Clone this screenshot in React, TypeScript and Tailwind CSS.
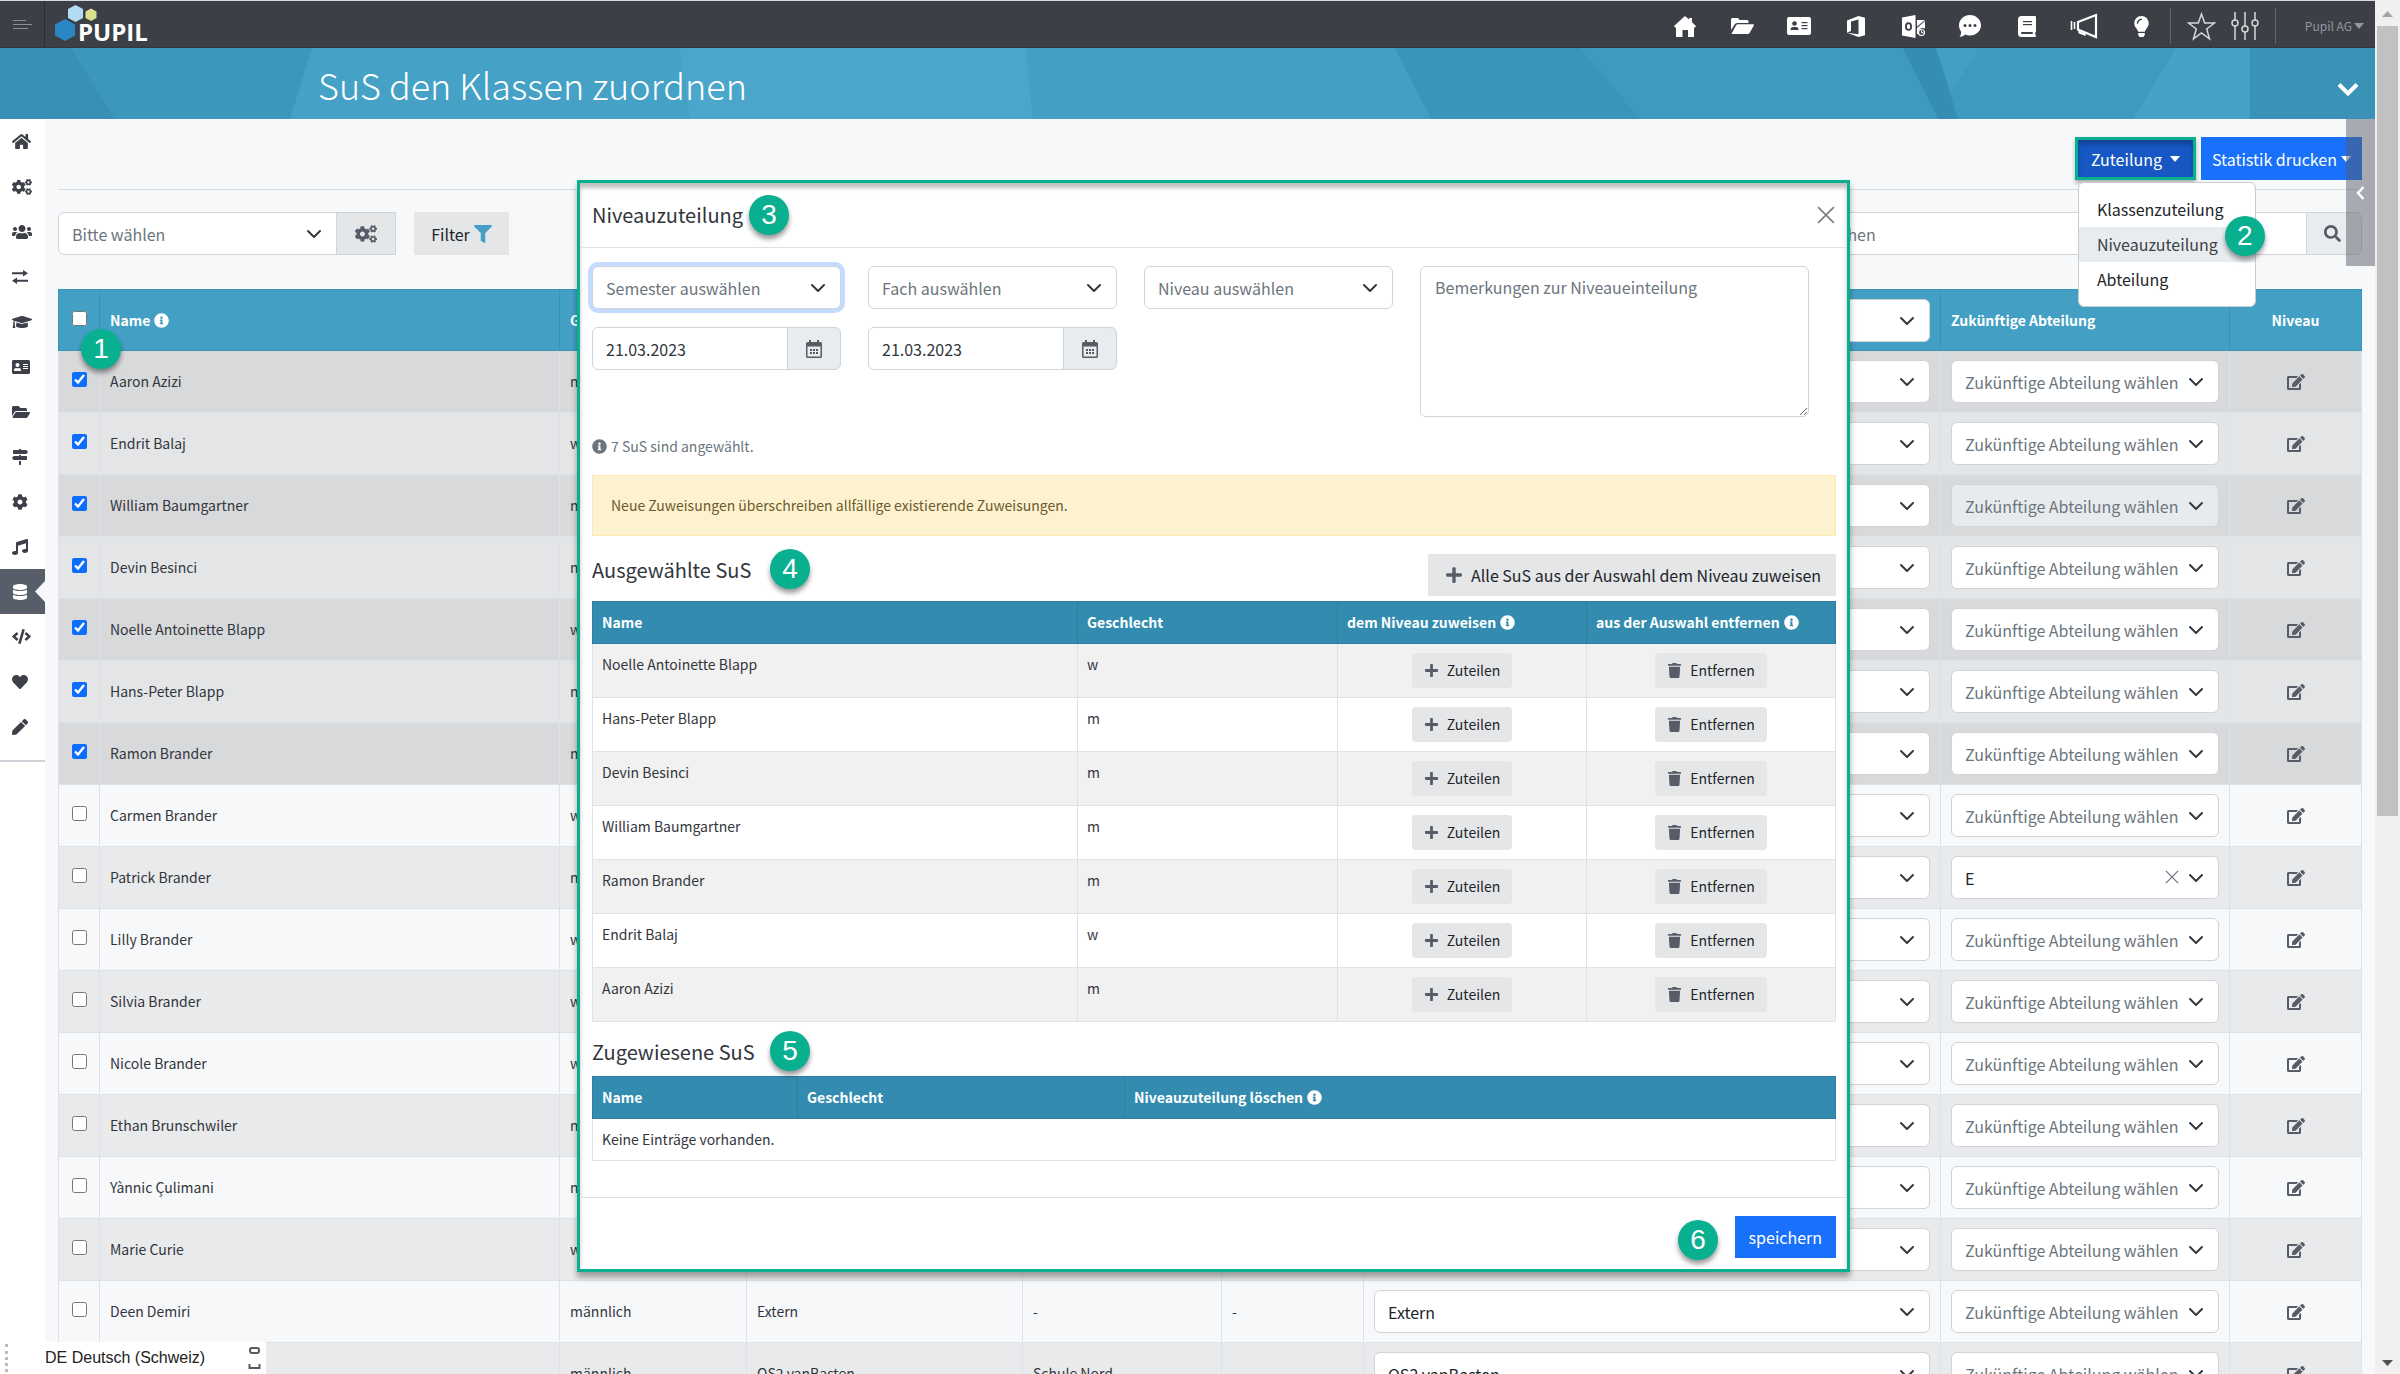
import type { ReactNode } from 'react'
import {
	FaAddressCard,
	FaCode,
	FaCog,
	FaCogs,
	FaDatabase,
	FaEdit,
	FaFilter,
	FaFolderOpen,
	FaGraduationCap,
	FaHeart,
	FaHome,
	FaInfoCircle,
	FaLightbulb,
	FaMapSigns,
	FaMusic,
	FaPen,
	FaPlus,
	FaSearch,
	FaTrash,
	FaUsers,
} from 'react-icons/fa'

type Pupil = {
	name: string
	gender: string
	school?: string
	place?: string
	target?: string
	checked?: boolean
	disabled?: boolean
	department?: string
}

const PUPILS: Pupil[] = [
	{ name: 'Aaron Azizi', gender: 'männlich', checked: true },
	{ name: 'Endrit Balaj', gender: 'weiblich', checked: true },
	{
		name: 'William Baumgartner',
		gender: 'männlich',
		checked: true,
		disabled: true,
	},
	{ name: 'Devin Besinci', gender: 'männlich', checked: true },
	{ name: 'Noelle Antoinette Blapp', gender: 'weiblich', checked: true },
	{ name: 'Hans-Peter Blapp', gender: 'männlich', checked: true },
	{ name: 'Ramon Brander', gender: 'männlich', checked: true },
	{ name: 'Carmen Brander', gender: 'weiblich' },
	{ name: 'Patrick Brander', gender: 'männlich', department: 'E' },
	{ name: 'Lilly Brander', gender: 'weiblich' },
	{ name: 'Silvia Brander', gender: 'weiblich' },
	{ name: 'Nicole Brander', gender: 'weiblich' },
	{ name: 'Ethan Brunschwiler', gender: 'männlich' },
	{ name: 'Yànnic Çulimani', gender: 'männlich' },
	{ name: 'Marie Curie', gender: 'weiblich' },
	{
		name: 'Deen Demiri',
		gender: 'männlich',
		school: 'Extern',
		place: '-',
		target: 'Extern',
	},
	{
		name: '',
		gender: 'männlich',
		school: 'OS2 vanBasten',
		place: 'Schule Nord',
		target: 'OS2 vanBasten',
	},
]

const SELECTED = [
	['Noelle Antoinette Blapp', 'w'],
	['Hans-Peter Blapp', 'm'],
	['Devin Besinci', 'm'],
	['William Baumgartner', 'm'],
	['Ramon Brander', 'm'],
	['Endrit Balaj', 'w'],
	['Aaron Azizi', 'm'],
]

const SIDEBAR = [
	{ label: 'Start', icon: <FaHome size={19} /> },
	{ label: 'Einstellungen', icon: <FaCogs size={20} /> },
	{ label: 'Personen', icon: <FaUsers size={20} /> },
	{ label: 'Zuordnung', icon: <SwapIcon /> },
	{ label: 'Klassen', icon: <FaGraduationCap size={20} /> },
	{ label: 'Kontakte', icon: <FaAddressCard size={18} /> },
	{ label: 'Ordner', icon: <FaFolderOpen size={18} /> },
	{ label: 'Wegweiser', icon: <FaMapSigns size={16} /> },
	{ label: 'System', icon: <FaCog size={16} /> },
	{ label: 'Musik', icon: <FaMusic size={16} /> },
	{ label: 'Daten', icon: <FaDatabase size={16} />, active: true },
	{ label: 'Entwicklung', icon: <FaCode size={19} /> },
	{ label: 'Favoriten', icon: <FaHeart size={16} /> },
	{ label: 'Bearbeiten', icon: <FaPen size={16} /> },
]

const TOPBAR = [
	{ label: 'Start', icon: <HouseIcon /> },
	{ label: 'Ordner', icon: <FolderIcon /> },
	{ label: 'Kontakte', icon: <CardIcon /> },
	{ label: 'Office', icon: <OfficeIcon /> },
	{ label: 'Outlook', icon: <OutlookIcon /> },
	{ label: 'Nachrichten', icon: <ChatIcon /> },
	{ label: 'Handbuch', icon: <BookIcon /> },
	{ label: 'Mitteilungen', icon: <MegaphoneIcon /> },
	{ label: 'Tipps', icon: <FaLightbulb size={21} /> },
]

function SwapIcon() {
	return (
		<svg width="16" height="14" viewBox="0 0 16 14" fill="currentColor">
			<path d="M0 2.200h11V0l5 3.200-5 3.200V4.200H0zM16 9.800v2H5V14L0 10.800l5-3.200v2.200z" />
		</svg>
	)
}

function HouseIcon() {
	return (
		<svg width="22" height="21" viewBox="0 0 22 21" fill="currentColor">
			<path d="M11 0l4 3.600V2h3v4.300L22 10l-1 1.500H20V21h-6v-7H8.500v7H2v-9.500H1L0 10z" />
		</svg>
	)
}

function FolderIcon() {
	return (
		<svg width="23" height="16" viewBox="0 0 23 16" fill="currentColor">
			<path d="M0 12V1.500Q0 0 1.500 0H7l1.500 2H16q1.500 0 1.500 1.500V5H6.500Q5 5 4 6z" />
			<path d="M.6 15.500L5 7.500Q5.600 6.300 7 6.300h15q1.500 0 .7 1.400l-4 7Q18 16 16.500 16H1.500Q.3 16 .6 15.500z" />
		</svg>
	)
}

function CardIcon() {
	return (
		<svg width="24" height="18" viewBox="0 0 24 18">
			<rect width="24" height="18" rx="2" fill="currentColor" />
			<g fill="#3d3f47">
				<circle cx="7.500" cy="6.500" r="2.300" />
				<path d="M3.500 13q0-3 2.500-3h3q2.500 0 2.500 3z" />
				<rect x="14.500" y="5" width="6" height="1.200" />
				<rect x="14.500" y="8" width="6" height="1.200" />
				<rect x="14.500" y="11" width="6" height="1.200" />
			</g>
		</svg>
	)
}

function OfficeIcon() {
	return (
		<svg width="18" height="21" viewBox="0 0 18 21" fill="currentColor">
			<path d="M0 4.500L11.500 0 18 1.800v17.400L11.500 21 0 16.800l11.500 1.400V3.600L4 5.400V15l-4 1.800z" />
		</svg>
	)
}

function OutlookIcon() {
	return (
		<svg width="23" height="23" viewBox="0 0 23 23">
			<path d="M0 2.500L13.500 0v23L0 20.500z" fill="currentColor" />
			<ellipse
				cx="6.500"
				cy="11.500"
				rx="2.600"
				ry="3.400"
				fill="none"
				stroke="#3d3f47"
				strokeWidth="1.800"
			/>
			<path
				d="M15 5h8l-8 6.500zM15 13l8-7v7.500a5 5 0 0 0-7 5.500H15z"
				fill="currentColor"
			/>
			<circle
				cx="19.500"
				cy="17.500"
				r="3"
				fill="none"
				stroke="currentColor"
				strokeWidth="1.200"
			/>
			<path d="M19.500 15.500v2.200h1.800" fill="none" stroke="currentColor" />
		</svg>
	)
}

function ChatIcon() {
	return (
		<svg width="22" height="22" viewBox="0 0 22 22">
			<path
				d="M11 0c6 0 11 4.500 11 10.300S17 20.500 11 20.500c-1.700 0-3.300-.4-4.700-1Q4 21.500.5 22q1.800-2.200 1.600-5.200A10 10 0 0 1 0 10.300C0 4.500 5 0 11 0z"
				fill="currentColor"
			/>
			<g fill="#3d3f47">
				<circle cx="6" cy="10.500" r="1.500" />
				<circle cx="11" cy="10.500" r="1.500" />
				<circle cx="16" cy="10.500" r="1.500" />
			</g>
		</svg>
	)
}

function BookIcon() {
	return (
		<svg width="18" height="21" viewBox="0 0 18 21">
			<path
				d="M3.500 0H17q1 0 1 1v14q0 .8-.6 1.200-.3 1.300 0 2.600.6.300.6 1.100 0 1.100-1 1.100H3.500Q0 21 0 17.500v-14Q0 0 3.500 0z"
				fill="currentColor"
			/>
			<g fill="#3d3f47">
				<rect x="5" y="5" width="9" height="1.200" />
				<rect x="5" y="8" width="9" height="1.200" />
				<rect x="3" y="16" width="12" height="2" rx="1" />
			</g>
		</svg>
	)
}

function MegaphoneIcon() {
	return (
		<svg
			width="28"
			height="26"
			viewBox="0 0 28 26"
			fill="none"
			stroke="currentColor"
			strokeWidth="2.200"
		>
			<path d="M1.500 8v9M4.500 9v7" strokeWidth="1.600" />
			<path d="M26 2v22L8 16.500V9z" />
			<path d="M9.500 17v2.500l5 2V19" />
		</svg>
	)
}

function StarIcon() {
	return (
		<svg
			width="29"
			height="29"
			viewBox="0 0 29 29"
			fill="none"
			stroke="currentColor"
			strokeWidth="1.500"
		>
			<path d="M14.500 2l3.200 9h9.800l-7.800 6 2.800 9.800-8-5.800-8 5.800L9.300 17 1.500 11h9.800z" />
		</svg>
	)
}

function SlidersIcon() {
	return (
		<svg
			width="28"
			height="28"
			viewBox="0 0 28 28"
			fill="none"
			stroke="currentColor"
			strokeWidth="1.500"
		>
			<path d="M4 0v8M4 14v14M14 0v14M14 20v8M24 0v8M24 14v14" />
			<circle cx="4" cy="11" r="3" />
			<circle cx="14" cy="17" r="3" />
			<circle cx="24" cy="11" r="3" />
		</svg>
	)
}

function CalendarIcon() {
	return (
		<svg width="16" height="18" viewBox="0 0 16 18">
			<path
				d="M3 0h2v2h6V0h2v2h1.500Q16 2 16 3.500v13q0 1.500-1.500 1.500h-13Q0 18 0 16.500v-13Q0 2 1.500 2H3zM1.500 6.500v10h13v-10z"
				fill="#575d68"
			/>
			<path
				d="M4 10h2M7 10h2M10 10h2M4 13h2M7 13h2M10 13h2"
				stroke="#575d68"
				strokeWidth="2"
			/>
		</svg>
	)
}

function CloseIcon({ size }: { size: number }) {
	return (
		<svg
			width={size}
			height={size}
			viewBox="0 0 16 16"
			fill="none"
			stroke="currentColor"
			strokeWidth="1.500"
		>
			<path d="M1 1l14 14M15 1L1 15" />
		</svg>
	)
}

function Caret({ className = '' }: { className?: string }) {
	return (
		<svg
			className={className}
			width="10"
			height="6"
			viewBox="0 0 10 6"
			fill="currentColor"
		>
			<path d="M0 0h10L5 6z" />
		</svg>
	)
}

function Chevron({ className }: { className?: string }) {
	return (
		<svg
			className={className}
			width="16"
			height="16"
			viewBox="0 0 16 16"
			fill="none"
			stroke="#343a40"
			strokeWidth="2"
			strokeLinecap="round"
			strokeLinejoin="round"
		>
			<path d="M2 5l6 6 6-6" />
		</svg>
	)
}

function Logo() {
	return (
		<div className="relative ml-[10px] h-[38px] w-[94px]">
			<svg
				className="absolute inset-0"
				width="44"
				height="38"
				viewBox="0 0 44 38"
			>
				<path d="M10 14l10 5.500v11L10 36 0 30.500v-11z" fill="#2a86c4" />
				<path d="M20.500 0L28 4v9l-7.500 4L13 13V4z" fill="#b2dcf1" />
				<path d="M36 3.500l5.500 3v6.500L36 16l-5.500-3V6.500z" fill="#dbe08f" />
			</svg>
			<span className="absolute top-[13px] left-[23px] font-['Open_Sans'] text-[24px] leading-7 font-bold text-white">
				PUPIL
			</span>
		</div>
	)
}

function Callout({ n, className }: { n: number; className: string }) {
	return (
		<span
			className={`absolute z-20 flex size-10 items-center justify-center rounded-full bg-[#08b090] font-['Liberation_Sans'] text-[28px] leading-10 text-white shadow-[0_4px_5px_rgba(0,0,0,.4)] ${className}`}
		>
			{n}
		</span>
	)
}

function Select({
	label,
	value,
	className = '',
	selectClass = 'text-[#6c757d]',
	clearable,
	disabled,
}: {
	label: string
	value?: string
	className?: string
	selectClass?: string
	clearable?: boolean
	disabled?: boolean
}) {
	return (
		<div className={`relative ${className}`}>
			<select
				aria-label={label}
				disabled={disabled}
				className={`block h-[43px] w-full appearance-none rounded-md border border-[#ced4da] bg-white pr-10 pl-[13px] text-[16px] leading-6 disabled:bg-[#e8ebee] disabled:opacity-100 ${selectClass}`}
			>
				<option>{value ?? label}</option>
			</select>
			{clearable && (
				<button
					type="button"
					aria-label="Auswahl löschen"
					className="absolute top-[14px] right-10 text-[#6c757d]"
				>
					<CloseIcon size={14} />
				</button>
			)}
			<Chevron className="pointer-events-none absolute top-[14px] right-[15px]" />
		</div>
	)
}

function DateField({ label }: { label: string }) {
	return (
		<div className="flex h-[43px] w-[249px]">
			<input
				aria-label={label}
				defaultValue="21.03.2023"
				className="w-0 grow rounded-l-md border border-[#ced4da] bg-white px-[13px] text-[16px]"
			/>
			<button
				type="button"
				aria-label="Kalender öffnen"
				className="-ml-px flex w-[54px] items-center justify-center rounded-r-md border border-[#ced4da] bg-[#e9ecef]"
			>
				<CalendarIcon />
			</button>
		</div>
	)
}

function SmallButton({ children }: { children: ReactNode }) {
	return (
		<button
			type="button"
			className="inline-flex h-[35px] items-center gap-2 rounded bg-[#e5e6e8] px-3 text-[14px] text-[#212529]"
		>
			{children}
		</button>
	)
}

function Topbar() {
	return (
		<header className="flex h-12 shrink-0 items-center border-t border-b border-t-[#d5dadc] border-b-[#34363d] bg-[#3d3f47] text-white">
			<button
				type="button"
				aria-label="Menü"
				className="flex h-full w-[45px] flex-col justify-center gap-[3px] border-r border-[#2b2d32] pl-[13px]"
			>
				<span className="h-px w-[13px] bg-[#8b8d92]" />
				<span className="h-px w-[19px] bg-[#8b8d92]" />
				<span className="h-px w-[15px] bg-[#8b8d92]" />
			</button>
			<Logo />
			<nav className="ml-auto flex h-full items-center pt-1">
				{TOPBAR.map((item) => (
					<a
						key={item.label}
						href="#"
						aria-label={item.label}
						className="flex w-[57px] items-center justify-center"
					>
						{item.icon}
					</a>
				))}
				<div className="flex h-9 items-center gap-[15px] border-r border-l border-[#62646b] px-4 text-[#d6d7d9]">
					<StarIcon />
					<SlidersIcon />
				</div>
				<button
					type="button"
					className="mr-[11px] ml-[29px] flex items-center gap-0.5 text-[12px] text-[#95979b]"
				>
					Pupil AG <Caret />
				</button>
			</nav>
		</header>
	)
}

function Banner() {
	return (
		<div className="relative flex h-[71px] shrink-0 items-center justify-between bg-[#439fc3] pr-4 pl-[318px]">
			<svg
				className="absolute inset-0 h-full w-full"
				viewBox="0 0 2375 71"
				preserveAspectRatio="none"
			>
				<path d="M0 0H2375V71H0z" fill="#3e9abf" />
				<path d="M0 0H71L115 71H0z" fill="#3890b4" />
				<path d="M71 0H312L290 71H115z" fill="#3c97bb" />
				<path d="M312 0H679L690 71H290z" fill="#45a1c5" />
				<path d="M679 0H1026L1033 71H690z" fill="#4aa6ca" />
				<path d="M1026 0H1395L1431 71H1033z" fill="#439fc3" />
				<path d="M1395 0H1580L1640 71H1431z" fill="#3a95ba" />
				<path d="M1903 0H1936L1958 71H1938z" fill="#358db2" />
				<path d="M1936 0H1979L1951 45z" fill="#43a0c4" />
				<path d="M2176 0H2250V71H2133z" fill="#45a1c5" />
				<path d="M2250 0H2375V71H2250z" fill="#3a93b6" />
			</svg>
			<h1 className="relative text-[36px] leading-[48px] font-light text-white">
				SuS den Klassen zuordnen
			</h1>
			<button type="button" aria-label="Aufklappen" className="relative mt-3">
				<svg
					width="22"
					height="16"
					viewBox="0 0 22 16"
					fill="none"
					stroke="#fff"
					strokeWidth="4"
				>
					<path d="M2 2.500l9 9 9-9" />
				</svg>
			</button>
		</div>
	)
}

function Sidebar() {
	return (
		<aside className="w-[45px] shrink-0 bg-white">
			<nav className="border-b-2 border-[#ced1d7] pb-[11px]">
				{SIDEBAR.map((item) => (
					<a
						key={item.label}
						href="#"
						aria-label={item.label}
						className={`relative flex h-[45px] items-center pl-3 ${item.active ? 'bg-[#575e69] text-white' : 'text-[#3d4049]'}`}
					>
						{item.icon}
						{item.active && (
							<svg
								className="absolute top-3 right-0"
								width="10"
								height="21"
								viewBox="0 0 10 21"
							>
								<path d="M10 0v21L0 10.500z" fill="#f7f8fa" />
							</svg>
						)}
					</a>
				))}
			</nav>
		</aside>
	)
}

function Actions() {
	return (
		<div className="flex justify-end gap-[5px] pt-[18px] text-[16px] text-white">
			<div className="relative z-30">
				<button
					type="button"
					className="flex h-[43px] items-center gap-2 border-[3px] border-[#08b090] bg-[#1657c4] px-[13px] shadow-[0_3px_4px_rgba(0,0,0,.3),inset_0_4px_4px_rgba(0,0,0,.25)]"
				>
					Zuteilung <Caret />
				</button>
				<div className="absolute top-[45px] left-[3px] w-[178px] rounded-md border border-[#c9cccf] bg-white py-[9px] text-[#212529]">
					<a href="#" className="block px-[18px] leading-[35px]">
						Klassenzuteilung
					</a>
					<a
						href="#"
						className="block bg-[#e9ecef] px-[18px] leading-[35px] text-[#3d4147]"
					>
						Niveauzuteilung
					</a>
					<a href="#" className="block px-[18px] leading-[35px]">
						Abteilung
					</a>
				</div>
				<Callout n={2} className="top-[79px] left-[150px]" />
			</div>
			<button
				type="button"
				className="flex h-[43px] items-center gap-1 bg-[#1970fb] px-[11px]"
			>
				Statistik drucken <Caret />
			</button>
		</div>
	)
}

function Toolbar() {
	return (
		<div className="mt-[22px] flex h-[43px] text-[16px]">
			<Select
				label="Bitte wählen"
				className="w-[279px]"
				selectClass="rounded-r-none text-[#6c757d]"
			/>
			<button
				type="button"
				aria-label="Auswahl konfigurieren"
				className="-ml-px flex w-[60px] items-center justify-center border border-[#ced4da] bg-[#e5e6e8] text-[#575d68]"
			>
				<FaCogs size={22} />
			</button>
			<button
				type="button"
				className="ml-[18px] flex w-[95px] items-center justify-center gap-1 bg-[#e5e6e8] text-[#212529]"
			>
				Filter <FaFilter size={18} className="text-[#439fc3]" />
			</button>
			<input
				aria-label="Suchen"
				placeholder="Suchen"
				className="ml-auto w-[500px] border border-r-0 border-[#ced4da] bg-white px-[13px] placeholder:text-[#6c757d]"
			/>
			<button
				type="button"
				aria-label="Suche starten"
				className="flex w-[56px] items-center justify-center rounded-r-md border border-[#ced4da] bg-[#e9ecef] pr-1 text-[#575d68]"
			>
				<FaSearch size={17} />
			</button>
		</div>
	)
}

function PupilTable() {
	return (
		<table className="mt-[34px] w-full table-fixed border-collapse text-[14px] text-[#32363c]">
			<colgroup>
				<col className="w-[41px]" />
				<col className="w-[460px]" />
				<col className="w-[187px]" />
				<col className="w-[276px]" />
				<col className="w-[199px]" />
				<col className="w-[142px]" />
				<col />
				<col className="w-[289px]" />
				<col className="w-[132px]" />
			</colgroup>
			<thead>
				<tr className="h-[61px] bg-[#439fc3] text-left text-white *:border *:border-[#3a93b6] *:px-[10px] *:font-bold">
					<th>
						<input
							type="checkbox"
							aria-label="Alle auswählen"
							className="mx-auto mb-1 block size-[15px]"
						/>
					</th>
					<th>
						<span className="flex items-center gap-1">
							Name <FaInfoCircle size={15} />
						</span>
					</th>
					<th>Geschlecht</th>
					<th>Schule</th>
					<th>Ort</th>
					<th>Klasse</th>
					<th>
						<Select label="Zukünftige Schule" />
					</th>
					<th>Zukünftige Abteilung</th>
					<th>
						<span className="block text-center">Niveau</span>
					</th>
				</tr>
			</thead>
			<tbody>
				{PUPILS.map((p, i) => (
					<tr
						key={i}
						className={`h-[62px] *:border *:border-[#dee1e5] *:px-[10px] ${
							p.checked
								? i % 2
									? 'bg-[#e3e5e7]'
									: 'bg-[#d8d9db]'
								: i % 2
									? 'bg-[#f7f8fa]'
									: 'bg-[#e9eaeb]'
						}`}
					>
						<td>
							<input
								type="checkbox"
								aria-label={p.name}
								defaultChecked={p.checked}
								className="mx-auto mb-1 block size-[15px] accent-[#0d6efd]"
							/>
						</td>
						<td>{p.name}</td>
						<td>{p.gender}</td>
						<td>{p.school}</td>
						<td>{p.place}</td>
						<td>-</td>
						<td>
							<Select
								label="Zukünftige Schule"
								value={p.target ?? ''}
								selectClass="text-[#212529]"
							/>
						</td>
						<td>
							<Select
								label="Zukünftige Abteilung wählen"
								value={p.department}
								disabled={p.disabled}
								clearable={!!p.department}
								selectClass={
									p.department ? 'text-[#212529]' : 'text-[#6c757d]'
								}
							/>
						</td>
						<td>
							<a
								href="#"
								aria-label="Niveau bearbeiten"
								className="flex justify-center text-[#575d68]"
							>
								<FaEdit size={18} />
							</a>
						</td>
					</tr>
				))}
			</tbody>
		</table>
	)
}

function LevelDialog() {
	return (
		<section
			role="dialog"
			aria-label="Niveauzuteilung"
			className="absolute top-[61px] left-[532px] z-10 w-[1273px] border-[3px] border-[#08b090] bg-white text-[#32363c] shadow-[0_5px_6px_rgba(0,0,0,.35),inset_0_5px_4px_rgba(0,0,0,.25)]"
		>
			<div className="relative flex h-[65px] items-center justify-between border-b border-[#dee2e6] px-3">
				<h2 className="text-[20px] leading-7">Niveauzuteilung</h2>
				<button
					type="button"
					aria-label="Schliessen"
					className="text-[#7d7f82]"
				>
					<CloseIcon size={18} />
				</button>
				<Callout n={3} className="top-3 left-[169px]" />
			</div>

			<div className="pt-[18px] pr-[11px] pl-3">
				<div className="flex gap-[27px]">
					<div className="grid grid-cols-[249px_249px_249px] content-start gap-x-[27px] gap-y-[18px]">
						<Select
							label="Semester auswählen"
							selectClass="border-[#86b7fe] text-[#6c757d] ring-4 ring-[#c5daff]"
						/>
						<Select label="Fach auswählen" />
						<Select label="Niveau auswählen" />
						<DateField label="Von" />
						<DateField label="Bis" />
					</div>
					<textarea
						aria-label="Bemerkungen"
						placeholder="Bemerkungen zur Niveaueinteilung"
						className="h-[151px] w-[389px] rounded-md border border-[#ced4da] px-[14px] py-2 text-[16px] leading-6 placeholder:text-[#6c757d]"
					/>
				</div>

				<p className="mt-[18px] flex items-center gap-1 text-[14px] leading-[22px] text-[#6c757d]">
					<FaInfoCircle size={15} /> 7 SuS sind angewählt.
				</p>
				<div className="mt-[18px] border border-[#ffe9b3] bg-[#fdf2d0] px-[18px] py-[18px] text-[14px] leading-[23px] text-[#6d5a2c]">
					Neue Zuweisungen überschreiben allfällige existierende Zuweisungen.
				</div>

				<div className="relative mt-[18px] flex h-[42px] items-center justify-between">
					<h3 className="pb-[10px] text-[20px] leading-7">Ausgewählte SuS</h3>
					<button
						type="button"
						className="flex h-[42px] items-center gap-2 bg-[#e5e6e8] pr-[15px] pl-[17px] text-[16px] text-[#212529]"
					>
						<FaPlus size={18} className="text-[#575d68]" />
						Alle SuS aus der Auswahl dem Niveau zuweisen
					</button>
					<Callout n={4} className="-top-[5px] left-[178px]" />
				</div>
				<table className="mt-[5px] w-full table-fixed border-collapse text-[14px]">
					<colgroup>
						<col />
						<col className="w-[260px]" />
						<col className="w-[249px]" />
						<col className="w-[249px]" />
					</colgroup>
					<thead>
						<tr className="h-[42px] bg-[#338cb0] text-left text-white *:border *:border-[#2d7e9f] *:px-[9px] *:font-bold">
							<th>Name</th>
							<th>Geschlecht</th>
							<th>
								<span className="flex items-center gap-1">
									dem Niveau zuweisen <FaInfoCircle size={15} />
								</span>
							</th>
							<th>
								<span className="flex items-center gap-1">
									aus der Auswahl entfernen <FaInfoCircle size={15} />
								</span>
							</th>
						</tr>
					</thead>
					<tbody>
						{SELECTED.map(([name, gender]) => (
							<tr
								key={name}
								className="h-[54px] odd:bg-[#f1f1f2] *:border *:border-[#dee2e6] *:px-[9px]"
							>
								<td className="pt-2 align-top leading-6">{name}</td>
								<td className="pt-2 align-top leading-6">{gender}</td>
								<td className="text-center">
									<SmallButton>
										<FaPlus size={15} className="text-[#575d68]" />
										Zuteilen
									</SmallButton>
								</td>
								<td className="text-center">
									<SmallButton>
										<FaTrash size={15} className="text-[#575d68]" />
										Entfernen
									</SmallButton>
								</td>
							</tr>
						))}
					</tbody>
				</table>

				<div className="relative pt-4 pb-[10px]">
					<h3 className="text-[20px] leading-7">Zugewiesene SuS</h3>
					<Callout n={5} className="top-[9px] left-[178px]" />
				</div>
				<table className="w-full table-fixed border-collapse text-[14px]">
					<colgroup>
						<col className="w-[205px]" />
						<col className="w-[327px]" />
						<col />
					</colgroup>
					<thead>
						<tr className="h-[42px] bg-[#338cb0] text-left text-white *:border *:border-[#2d7e9f] *:px-[9px] *:font-bold">
							<th>Name</th>
							<th>Geschlecht</th>
							<th>
								<span className="flex items-center gap-1">
									Niveauzuteilung löschen <FaInfoCircle size={15} />
								</span>
							</th>
						</tr>
					</thead>
					<tbody>
						<tr className="h-[42px]">
							<td colSpan={3} className="border border-[#dee2e6] px-[9px]">
								Keine Einträge vorhanden.
							</td>
						</tr>
					</tbody>
				</table>
			</div>

			<div className="relative mt-9 flex justify-end border-t border-[#dee2e6] pt-[18px] pr-[11px] pb-[11px] pl-3">
				<button
					type="button"
					className="h-[42px] bg-[#1970fb] px-[14px] text-[16px] text-white"
				>
					speichern
				</button>
				<Callout n={6} className="top-[22px] right-[129px]" />
			</div>
		</section>
	)
}

function Scrollbar() {
	return (
		<div className="flex w-[25px] shrink-0 flex-col items-center bg-[#f0f0f0] pt-[11px] pb-2">
			<svg width="11" height="6" viewBox="0 0 11 6">
				<path d="M5.500 0L11 6H0z" fill="#a3a3a3" />
			</svg>
			<div className="mt-[9px] h-[790px] w-[21px] bg-[#c1c1c1]" />
			<svg className="mt-auto" width="11" height="6" viewBox="0 0 11 6">
				<path d="M0 0h11L5.500 6z" fill="#505050" />
			</svg>
		</div>
	)
}

function LanguageBar() {
	return (
		<div className="absolute bottom-0 left-0 z-20 flex h-8 w-[266px] items-center bg-white pr-1 pl-[5px] font-['Liberation_Sans'] text-[16px] text-[#222]">
			<span className="h-7 border-l-[3px] border-dotted border-[#bdbdbd]" />
			<span className="ml-[37px] grow">DE Deutsch (Schweiz)</span>
			<svg
				width="14"
				height="24"
				viewBox="0 0 14 24"
				fill="none"
				stroke="#5a5a5a"
				strokeWidth="2"
			>
				<rect x="2" y="2" width="9" height="5" rx="2" />
				<path d="M1.500 18v4h10v-4" />
			</svg>
		</div>
	)
}

export default function App() {
	return (
		<div className="flex h-screen overflow-hidden bg-[#f7f8fa] font-['Noto_Sans_CJK_SC',sans-serif] text-[#32363c]">
			<div className="relative flex min-w-0 grow flex-col">
				<Topbar />
				<Banner />
				<div className="flex min-h-0 grow">
					<Sidebar />
					<main className="relative min-w-0 grow overflow-hidden px-[13px]">
						<Actions />
						<hr className="mt-[9px] border-[#d9dcdf]" />
						<Toolbar />
						<PupilTable />
						<Callout n={1} className="top-[210px] left-9" />
						<LevelDialog />
						<button
							type="button"
							aria-label="Seitenleiste öffnen"
							className="absolute top-0 right-0 z-30 flex h-[147px] w-[29px] items-center justify-center bg-[#575d68]/50"
						>
							<svg
								width="9"
								height="14"
								viewBox="0 0 9 14"
								fill="none"
								stroke="#fff"
								strokeWidth="2.500"
							>
								<path d="M7.500 1L2 7l5.500 6" />
							</svg>
						</button>
					</main>
				</div>
				<LanguageBar />
			</div>
			<Scrollbar />
		</div>
	)
}
